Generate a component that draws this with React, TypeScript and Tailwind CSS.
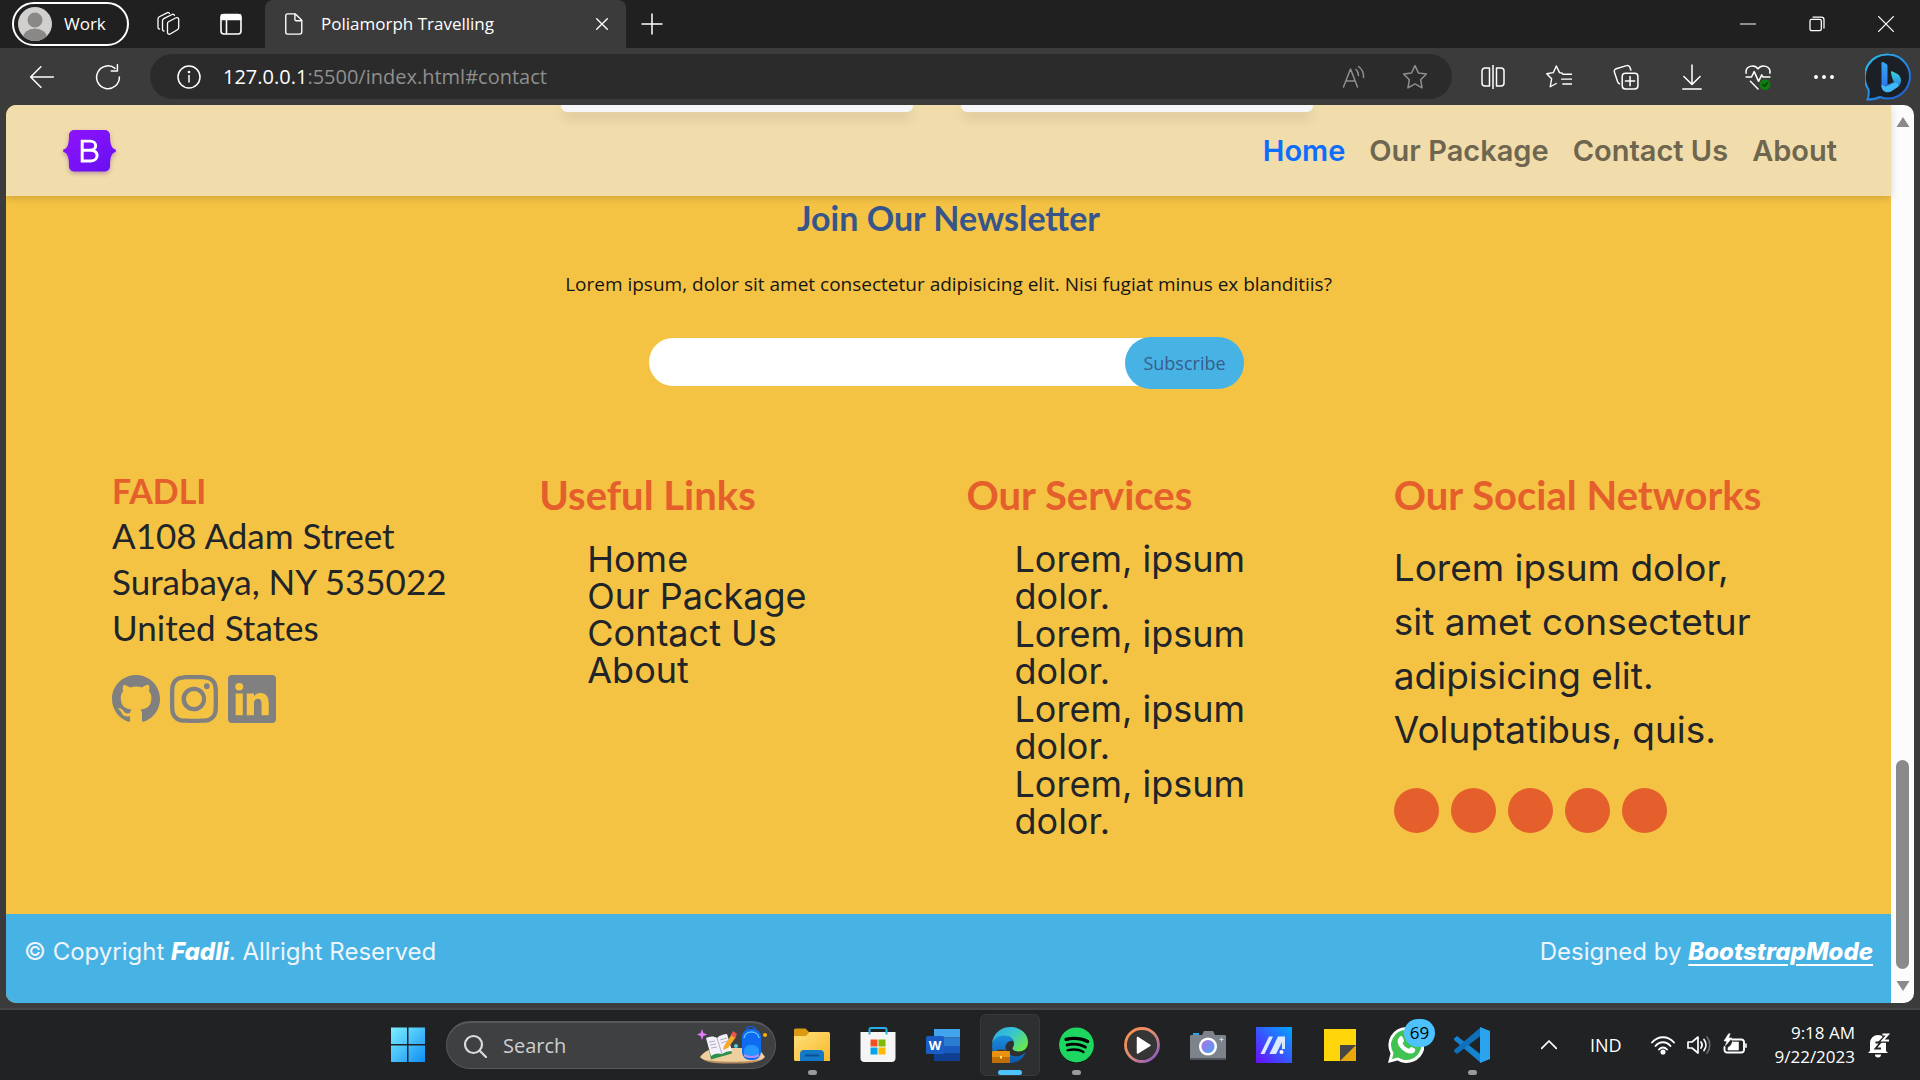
import type { ReactNode } from "react";
import { BsGithub, BsInstagram, BsLinkedin } from "react-icons/bs";
import { FaSpotify } from "react-icons/fa";

const UI = "font-['Open_Sans',sans-serif]";
const HEAD = "font-['Lato',sans-serif]";
const BODY = "font-['Inter',sans-serif]";

function Stroke({ children, box = 24, className = "size-6", width = 1.3 }: { children: ReactNode; box?: number; className?: string; width?: number }) {
  return (
    <svg viewBox={`0 0 ${box} ${box}`} className={className} fill="none" stroke="currentColor" strokeWidth={width} strokeLinecap="round" strokeLinejoin="round" aria-hidden="true">
      {children}
    </svg>
  );
}

function ChromeButton({ label, className, children }: { label: string; className: string; children: ReactNode }) {
  return (
    <button type="button" aria-label={label} className={`flex items-center justify-center shrink-0 ${className}`}>
      {children}
    </button>
  );
}

function TabStrip() {
  return (
    <div className="flex h-12 bg-[#202020] text-white">
      <button type="button" className="ml-3 mt-[2px] flex h-11 w-[117px] shrink-0 items-center gap-3 rounded-full border-2 border-white pl-1 text-[17px]">
        <svg viewBox="0 0 34 34" className="size-[34px]" aria-hidden="true">
          <clipPath id="face"><circle cx="17" cy="17" r="17" /></clipPath>
          <g clipPath="url(#face)">
            <rect width="34" height="34" fill="#d2d0ce" />
            <circle cx="17" cy="13" r="7.5" fill="#8a8886" />
            <ellipse cx="17" cy="31" rx="12" ry="9.5" fill="#8a8886" />
          </g>
        </svg>
        Work
      </button>
      <ChromeButton label="Workspaces" className="ml-[27px] w-6">
        <Stroke className="size-[26px]">
          <path d="M11.500 11.500a2 2 0 0 1 1-1.700l7.500-4a1.800 1.800 0 0 1 2.700 1.500v8.200a2.500 2.500 0 0 1-1.300 2.200l-7.200 4.300a1.800 1.800 0 0 1-2.700-1.600z" />
          <path d="M8 19a1.500 1.500 0 0 1-1.500-1.500V8.800A2.500 2.500 0 0 1 7.800 6.600L16 2.500a1.800 1.800 0 0 1 2.500.8" />
          <path d="M3.500 17A1.500 1.500 0 0 1 2 15.500V7a2.500 2.500 0 0 1 1.300-2.200L11 .8a1.800 1.800 0 0 1 2.500.6" />
        </Stroke>
      </ChromeButton>
      <ChromeButton label="Tab actions" className="ml-[39px] w-6">
        <Stroke width={1.6}>
          <rect x="2" y="2.500" width="20" height="19.500" rx="3" />
          <path d="M2.500 3h19v4.500h-19z" fill="currentColor" />
          <path d="M7.500 8v13.500" />
        </Stroke>
      </ChromeButton>
      <div className="ml-[22px] flex w-[361px] min-w-0 items-center rounded-t-lg bg-[#3b3b3b] pl-[18px] text-[17px]">
        <Stroke className="h-[26px] w-[22px] shrink-0" width={1.500}>
          <path d="M5 1h8.500l7 7v12.500a2.500 2.500 0 0 1-2.500 2.500H5a2 2 0 0 1-2-2V3a2 2 0 0 1 2-2zM13 1.500V7a1.500 1.500 0 0 0 1.500 1.500h5.500" />
        </Stroke>
        <span className="ml-4 flex-1 truncate">Poliamorph Travelling</span>
        <ChromeButton label="Close tab" className="mr-[14px] w-5">
          <Stroke className="size-4" width={2}><path d="M4 4l16 16M20 4L4 20" /></Stroke>
        </ChromeButton>
      </div>
      <ChromeButton label="New tab" className="ml-[14px] w-6">
        <Stroke width={1.500}><path d="M12 2v20M2 12h20" /></Stroke>
      </ChromeButton>
      <div className="ml-auto flex">
        <ChromeButton label="Minimize" className="w-[69px]"><Stroke className="size-4" width={1.700}><path d="M0 12h24" /></Stroke></ChromeButton>
        <ChromeButton label="Restore" className="w-[69px]">
          <Stroke className="size-4" width={1.900}><rect x="1.500" y="5" width="17" height="17" rx="2.500" /><path d="M6 1.800h12.500a4 4 0 0 1 4 4V18" /></Stroke>
        </ChromeButton>
        <ChromeButton label="Close window" className="w-[69px]"><Stroke className="size-4" width={1.900}><path d="M1 1l22 22M23 1L1 23" /></Stroke></ChromeButton>
      </div>
    </div>
  );
}

function Toolbar() {
  return (
    <div className="flex h-[57px] items-center bg-[#3b3b3b] text-white">
      <ChromeButton label="Back" className="ml-7 w-7"><Stroke className="size-[26px]" width={1.400}><path d="M22.500 12H2M11 2.500L1.500 12l9.500 9.500" /></Stroke></ChromeButton>
      <ChromeButton label="Refresh" className="ml-[38px] w-7"><Stroke className="size-[26px]" width={1.400}><path d="M22.500 12a10.500 10.500 0 1 1-4-8M20.700 .8v5.700h-5.700" /></Stroke></ChromeButton>
      <div className="ml-7 flex h-[45px] min-w-0 flex-1 items-center rounded-full bg-[#2b2b2b] pl-[27px] pr-6">
        <ChromeButton label="Site information" className="w-6">
          <Stroke width={1.500}><circle cx="12" cy="12" r="11" /><path d="M12 10.500v6.500" /><circle cx="12" cy="7" r=".6" fill="currentColor" /></Stroke>
        </ChromeButton>
        <div className="ml-[22px] flex-1 truncate text-[20px] text-[#8f8f8f]"><span className="text-white">127.0.0.1</span>:5500/index.html#contact</div>
        <ChromeButton label="Read aloud" className="w-6 text-[#8f8f8f]">
          <Stroke width={1.500}><path d="M1.500 22L8.500 4l7 18M4 16h9M14 4.500a8 8 0 0 1 2.500 6M16.500 1.500a12 12 0 0 1 5 11" /></Stroke>
        </ChromeButton>
        <ChromeButton label="Add to favorites" className="ml-9 w-[26px] text-[#8f8f8f]">
          <Stroke className="size-[26px]" width={1.400}><path d="M12 1.500l3.200 6.800 7.300 1-5.300 5.200 1.300 7.500L12 18.400 5.500 22l1.300-7.500L1.500 9.300l7.300-1z" /></Stroke>
        </ChromeButton>
      </div>
      <div className="ml-2 flex items-center">
        <ChromeButton label="Split screen" className="w-[66px]"><Stroke width={1.500}><path d="M8.500 3H4a3 3 0 0 0-3 3v12a3 3 0 0 0 3 3h4.500zM15.500 3H20a3 3 0 0 1 3 3v12a3 3 0 0 1-3 3h-4.500zM12 0v24" /></Stroke></ChromeButton>
        <ChromeButton label="Favorites" className="w-[66px]"><Stroke className="size-[26px]" width={1.300}><path d="M15 8.500L12.500 8 9.500 1.800 6.700 8l-6 1 4.500 4.700-1.300 7.300 5.600-3M15.500 9.500H24M14.500 14H24M15.500 18.500H24" /></Stroke></ChromeButton>
        <ChromeButton label="Collections" className="w-[67px]"><Stroke className="size-[26px]" width={1.400}><rect x="8.500" y="8.500" width="14.500" height="14.500" rx="3" /><path d="M15.750 11.500v8.500M11.500 15.750H20M16.500 5.500l-.8-2.300A2.500 2.500 0 0 0 12.500 1.500L3 4.300A2.500 2.500 0 0 0 1.300 7.500l3 9a2.500 2.500 0 0 0 1.700 1.700" /></Stroke></ChromeButton>
        <ChromeButton label="Downloads" className="w-[66px]"><Stroke className="size-[26px]" width={1.400}><path d="M12 1v18M4.500 11.500L12 19l7.500-7.500M3.500 23h17" /></Stroke></ChromeButton>
        <ChromeButton label="Browser essentials" className="w-[66px]">
          <Stroke className="size-[26px]" width={1.400}><path d="M1 8.500C0 2 8.500-.5 12 4.500 15.500-.5 24 2 23 8.500M1 12h5l2.500-5 4 9 3-6 1 2H23M5 16l7 7" /><circle cx="18.500" cy="19" r="5" fill="#107c10" stroke="none" /><path d="M16.500 19l1.500 1.500 2.800-3" stroke="#063b06" /></Stroke>
        </ChromeButton>
        <ChromeButton label="Settings and more" className="w-[66px]"><Stroke><g fill="currentColor"><circle cx="4" cy="12" r="1.300" /><circle cx="12" cy="12" r="1.300" /><circle cx="20" cy="12" r="1.300" /></g></Stroke></ChromeButton>
        <ChromeButton label="Bing Chat" className="mr-[6px] ml-[7px] w-[50px]">
          <svg viewBox="0 0 48 48" className="size-12" aria-hidden="true">
            <defs>
              <linearGradient id="ring" x1="0" y1="0" x2="1" y2="1"><stop offset="0" stopColor="#2bc4ee" /><stop offset="1" stopColor="#1c56d8" /></linearGradient>
              <linearGradient id="bing" x1="0" y1="0" x2="0" y2="1"><stop offset="0" stopColor="#35a6f6" /><stop offset="1" stopColor="#2f74ea" /></linearGradient>
              <linearGradient id="bing2" x1="0" y1="0" x2="0" y2="1"><stop offset="0" stopColor="#35d6d8" /><stop offset="1" stopColor="#2769e8" /></linearGradient>
            </defs>
            <path d="M24 1.500a22 22 0 1 1-9 42.500c-4 2-8 2.500-12.500 2.500 1.500-3 1.500-6 1-10A22.500 22.500 0 0 1 24 1.500z" fill="#1b1f26" stroke="url(#ring)" strokeWidth="2" />
            <path d="M16.500 10.500c0-1.500 1-1.800 2-1.200l2.500 1.500c1 .7 1.500 1.300 1.500 2.500V32l-6 2z" fill="url(#bing)" />
            <path d="M26 19.500c-.3-1 .5-1.500 1.500-1.100l5 2.600c4.500 3 4.500 9 1 12.500L25 38.500l-4-6 8-3.500c-1.500-2.500-2.500-6-3-9.500z" fill="url(#bing2)" />
            <path d="M16.500 31c2 2.500 4.500 2.800 7.500 1.500l6-2.800c3 .3 4 2 3 4l-6.500 4.500c-5.500 3-10-.7-10-5.200z" fill="#41b8f7" />
          </svg>
        </ChromeButton>
      </div>
    </div>
  );
}

function SiteNav() {
  const links = ["Our Package", "Contact Us", "About"];
  return (
    <header className="relative z-10 flex h-[91px] items-center justify-between bg-[#f1dcab] pl-[57px] pr-[54px] shadow-[0_2px_8px_rgba(0,0,0,0.16)]">
      <div className="absolute inset-x-0 top-0 flex h-10 justify-center gap-12 overflow-hidden pr-6">
        <div className="h-[7px] w-[352px] rounded-b-md bg-[#f6f5f8] shadow-[0_6px_12px_rgba(0,0,0,0.12)]" />
        <div className="h-[7px] w-[352px] rounded-b-md bg-[#f6f5f8] shadow-[0_6px_12px_rgba(0,0,0,0.12)]" />
      </div>
      <a href="#home" aria-label="Bootstrap" className="relative">
        <svg viewBox="0 0 512 408" className="h-[42px] w-[53px] drop-shadow-[0_2px_2px_rgba(60,0,120,0.3)]" aria-hidden="true">
          <defs><linearGradient id="bs" x1="0" y1="0" x2="1" y2="1"><stop offset="0" stopColor="#9013fe" /><stop offset="1" stopColor="#6610f2" /></linearGradient></defs>
          <path fill="url(#bs)" d="M56.500 53.300C55.600 26 76.800 0 106.300 0h299.500c29.500 0 50.700 26 49.700 53.300-.9 26.300.3 60.300 8.900 88.100 8.600 27.900 23.100 45.500 46.900 47.800v25.600c-23.800 2.300-38.300 19.900-46.900 47.800-8.600 27.800-9.800 61.800-8.900 88.100.9 27.300-20.200 53.300-49.700 53.300H106.300c-29.500 0-50.700-26-49.800-53.300.9-26.300-.3-60.300-8.900-88.100-8.600-27.900-23.200-45.500-47-47.800v-25.600c23.800-2.300 38.400-19.900 47-47.800 8.600-27.800 9.800-61.800 8.900-88.100z" />
          <path fill="none" stroke="#fff" strokeWidth="29" d="M185 108h77c72 0 72 88 0 88h-77m0 0h84c82 0 80 105 0 105h-84zM185 94v221" />
        </svg>
      </a>
      <nav className={`relative flex gap-6 text-[29px] leading-9 font-semibold text-[#6e664f] ${BODY}`}>
        <a href="#home" className="text-[#0d6efd]">Home</a>
        {links.map((l) => <a key={l} href="#contact">{l}</a>)}
      </nav>
    </header>
  );
}

function Newsletter() {
  return (
    <section className="flex flex-col items-center text-center">
      <h2 className={`text-[34px] leading-[44px] font-bold text-[#36558a] ${HEAD}`}>Join Our Newsletter</h2>
      <p className={`mt-[30px] text-[19px] leading-7 text-[#151515] ${UI}`}>Lorem ipsum, dolor sit amet consectetur adipisicing elit. Nisi fugiat minus ex blanditiis?</p>
      <form className="mt-[39px] mr-1 flex h-[52px] items-start" onSubmit={(e) => e.preventDefault()}>
        <input type="email" aria-label="Email address" className="mt-px h-12 w-[494px] rounded-l-full bg-white px-6 text-lg outline-none" />
        <button type="submit" className={`-ml-[18px] h-[52px] w-[119px] rounded-full bg-[#47b2e4] text-[18px] text-[#37517e]/90 ${UI}`}>Subscribe</button>
      </form>
    </section>
  );
}

function ColumnTitle({ children }: { children: ReactNode }) {
  return <h3 className={`text-[40px] leading-[50px] font-bold whitespace-nowrap text-[#e45f2b] ${HEAD}`}>{children}</h3>;
}

function FooterColumns() {
  const useful = ["Home", "Our Package", "Contact Us", "About"];
  const services = ["a", "b", "c", "d"];
  const social = ["Twitter", "Facebook", "Instagram", "Skype", "LinkedIn"];
  return (
    <section className={`grid grid-cols-4 px-[88px] pt-[81px] pb-[72px] text-[#212529] ${BODY}`}>
      <div className="px-[18px]">
        <h3 className={`text-[34px] leading-[42px] font-bold text-[#e45f2b] ${HEAD}`}>FADLI</h3>
        <address className={`text-[35px] leading-[46px] whitespace-nowrap not-italic ${HEAD}`}>
          A108 Adam Street<br />Surabaya, NY 535022<br />United States
        </address>
        <div className="mt-[25px] flex gap-[10px] text-[48px] text-[#808080]">
          <a href="#github" aria-label="GitHub"><BsGithub /></a>
          <a href="#instagram" aria-label="Instagram"><BsInstagram /></a>
          <a href="#linkedin" aria-label="LinkedIn"><BsLinkedin /></a>
        </div>
      </div>
      <div className="px-[18px]">
        <ColumnTitle>Useful Links</ColumnTitle>
        <ul className="pt-[21px] pl-12 text-[36px] leading-[37px] whitespace-nowrap">
          {useful.map((u) => <li key={u}><a href="#home">{u}</a></li>)}
        </ul>
      </div>
      <div className="px-[18px]">
        <ColumnTitle>Our Services</ColumnTitle>
        <ul className="pt-[21px] pl-12 text-[36px] leading-[37px]">
          {services.map((s) => <li key={s} className="pb-px"><a href="#services">Lorem, ipsum<br />dolor.</a></li>)}
        </ul>
      </div>
      <div className="px-[18px]">
        <ColumnTitle>Our Social Networks</ColumnTitle>
        <p className="mt-[21px] text-[37px] leading-[54px] whitespace-nowrap">
          Lorem ipsum dolor,<br />sit amet consectetur<br />adipisicing elit.<br />Voluptatibus, quis.
        </p>
        <div className="mt-[31px] flex gap-3">
          {social.map((s) => <a key={s} href="#social" aria-label={s} className="size-[45px] rounded-full bg-[#e45f2b]" />)}
        </div>
      </div>
    </section>
  );
}

function Site() {
  return (
    <div className="flex flex-1 overflow-hidden rounded-[10px]">
      <main className="flex min-w-0 flex-1 flex-col bg-[#f5c344]">
        <SiteNav />
        <Newsletter />
        <FooterColumns />
        <footer className={`mt-auto flex h-[89px] items-start justify-between bg-[#47b2e4] px-[18px] pt-5 text-[24px] leading-9 text-[#eef5fc] ${BODY}`}>
          <p>© Copyright <strong className="font-extrabold italic text-white">Fadli</strong>. Allright Reserved</p>
          <p>Designed by <a href="#bootstrapmode" className="font-extrabold text-white italic underline decoration-2 underline-offset-4">BootstrapMode</a></p>
        </footer>
      </main>
      <div className="flex w-[23px] shrink-0 flex-col items-center bg-[#fcfcfc] py-3 text-[#8a8a8a]">
        <svg viewBox="0 0 14 10" className="w-[14px]" aria-hidden="true"><path d="M7 0l6.500 10H.5z" fill="currentColor" /></svg>
        <div className="mt-auto mb-3 h-[209px] w-[13px] rounded-full bg-[#8a8a8a]" />
        <svg viewBox="0 0 14 10" className="w-[14px]" aria-hidden="true"><path d="M7 10L.5 0h13z" fill="currentColor" /></svg>
      </div>
    </div>
  );
}

const WindowsLogo = () => (
  <svg viewBox="0 0 36 36" className="size-9" aria-hidden="true">
    <defs><linearGradient id="win" x1="0" y1="0" x2="1" y2="1"><stop offset="0" stopColor="#7df0ff" /><stop offset="1" stopColor="#0f8ef5" /></linearGradient></defs>
    <path fill="url(#win)" d="M1 .5h16V17H1zM18.500 .5H35V17H18.500zM1 18.500h16V35H1zM18.500 18.500H35V35H18.500z" />
  </svg>
);

const SearchArt = () => (
  <svg viewBox="0 0 72 40" className="h-10 w-[72px]" aria-hidden="true">
    <path d="M3 31c3-4 8-9 20-9h30c8 0 12 4 15 9-5 5-12 6-32 6S8 36 3 31z" fill="#f0cf9f" />
    <path d="M6 33.500c14 3 44 3 58 0-6 4-14 4-28 4s-24 0-30-4z" fill="#b98b5c" />
    <path d="M10 14l21-4 4 17.500-21 6z" fill="#2f8f4e" />
    <path d="M9 12c4-2 8-2 11 0 3-3 7-4 10-4l5 17c-4 0-7 1-10 3-3-1-7-1-11 2z" fill="#f4f1fa" />
    <path d="M20 12l5 16M12 16l6-1M13 19l6-1M14 22l6-1M23 14l7-2M24 17l7-2" stroke="#a9a3bb" strokeWidth=".9" />
    <path d="M27 20l8-12 4 3-8 11-5 2z" fill="#f9a825" />
    <path d="M34 9l2-4 4 3-2 4z" fill="#ef5350" />
    <path d="M5 3l1.400 4 4 1.500-4 1.500L5 14l-1.400-4L0 8.500 3.600 7z" fill="#e27cf5" />
    <circle cx="39" cy="20" r="2" fill="#4dd0e1" /><circle cx="68" cy="9" r="2" fill="#ffb300" />
    <path d="M50 4a4 4 0 0 1 8 0" fill="none" stroke="#1257d0" strokeWidth="2" />
    <rect x="45" y="3" width="19" height="31" rx="8" fill="#0d6cf2" />
    <path d="M47 12c1-8 14-8 15 0" fill="none" stroke="#5cc4ff" strokeWidth="1.500" />
    <rect x="47" y="19" width="15" height="13" rx="6" fill="#2596ff" />
    <path d="M47 28q7.500 4 15 0v2.500q-7.500 3-15 0z" fill="#b48cf5" />
  </svg>
);

const Explorer = () => (
  <svg viewBox="0 0 36 36" className="size-9" aria-hidden="true">
    <defs><linearGradient id="fold" x1="0" y1="0" x2="1" y2="1"><stop offset="0" stopColor="#ffe07a" /><stop offset="1" stopColor="#f7b92c" /></linearGradient></defs>
    <path d="M0 3a1.500 1.500 0 0 1 1.500-1.500h10L15 5h20v8H0z" fill="#dc9a13" />
    <path d="M0 9h12l3.500-4H34.500a1.500 1.500 0 0 1 1.500 1.500V34H1.500A1.500 1.500 0 0 1 0 32.500z" fill="url(#fold)" />
    <path d="M6 34v-7a4 4 0 0 1 4-4h16a4 4 0 0 1 4 4v7z" fill="#1478c8" />
    <path d="M11 28.500h14" stroke="#0b4f8e" strokeWidth="2" />
  </svg>
);

const Store = () => (
  <svg viewBox="0 0 36 36" className="size-9" aria-hidden="true">
    <path d="M9.500 8V2.500a1.500 1.500 0 0 1 1.500-1.500h14a1.500 1.500 0 0 1 1.500 1.500V8" fill="none" stroke="#27aee8" strokeWidth="2" />
    <path d="M.5 5h35v26a4 4 0 0 1-4 4h-27a4 4 0 0 1-4-4z" fill="#f5f5f5" />
    <path d="M9.500 5V7.500M26.500 5V7.500" stroke="#27aee8" strokeWidth="2" />
    <path d="M10.500 12.500h7v7h-7z" fill="#f25022" /><path d="M18.500 12.500h7v7h-7z" fill="#7fba00" />
    <path d="M10.500 20.500h7v7h-7z" fill="#00a4ef" /><path d="M18.500 20.500h7v7h-7z" fill="#ffb900" />
  </svg>
);

const Word = () => (
  <svg viewBox="0 0 36 36" className="size-9" aria-hidden="true">
    <path d="M8 2h26v8.500H8z" fill="#41a5ee" /><path d="M8 10.500h26V19H8z" fill="#2b7cd3" /><path d="M8 19h26v7H8z" fill="#185abd" /><path d="M8 26h26v8H8z" fill="#103f91" />
    <rect x="0" y="9" width="18" height="18" rx="1.500" fill="#1a5dc4" />
    <text x="9" y="23" textAnchor="middle" fontFamily="Open Sans" fontWeight="700" fontSize="13" fill="#fff">W</text>
  </svg>
);

const Edge = () => (
  <svg viewBox="0 0 36 36" className="size-9" aria-hidden="true">
    <defs>
      <linearGradient id="eg" x1="0" y1="0" x2="1" y2=".7"><stop offset="0" stopColor="#2aa4ea" /><stop offset=".5" stopColor="#37c6cf" /><stop offset="1" stopColor="#6be84c" /></linearGradient>
      <linearGradient id="eb" x1="0" y1="0" x2="0" y2="1"><stop offset="0" stopColor="#1b8fe0" /><stop offset="1" stopColor="#0d56a8" /></linearGradient>
    </defs>
    <path d="M0 17C1 6 9 0 18.500 0 29 0 36 7 36 15c0 6-4 9.500-9 9.500-4 0-6.500-1.500-6.500-3 0-1 1.500-2 1.500-5 0-4-4-7.500-9-7.500-6 0-11 3-13 8z" fill="url(#eg)" />
    <path d="M0 20C0 12 6 8.500 12 8.500c5 0 8.500 2.500 9.700 5.500C16 12.500 12 18 14 23.500c2 4.500 8 6.500 13 5.500 3-.6 4.500-2.500 6.500-3.500-2 6-8 10.500-15 10.500C8 36 0 29 0 20z" fill="url(#eb)" />
    <path d="M6 25.500v-2h6v2" fill="none" stroke="#53300b" strokeWidth="1.500" />
    <rect x="0" y="24" width="18" height="12" rx="1" fill="#e8920f" /><path d="M0 30h18v6H0z" fill="#c06f08" /><rect x="8" y="29" width="2" height="2.500" fill="#ffe27a" />
  </svg>
);

const Spotify = () => (
  <span className="flex size-[35px] items-center justify-center rounded-full bg-black text-[36px] text-[#1ed760]"><FaSpotify /></span>
);

const Player = () => (
  <svg viewBox="0 0 36 36" className="size-9" aria-hidden="true">
    <defs><linearGradient id="mp" x1="0" y1="0" x2="1" y2="1"><stop offset="0" stopColor="#ff9142" /><stop offset=".5" stopColor="#e08a78" /><stop offset="1" stopColor="#7a52d0" /></linearGradient></defs>
    <circle cx="18" cy="18" r="16.500" fill="#353535" stroke="url(#mp)" strokeWidth="2.800" />
    <path d="M13.500 10.500v15.500l12.500-7.700z" fill="#fff" stroke="#fff" strokeWidth="1.500" strokeLinejoin="round" />
  </svg>
);

const Camera = () => (
  <svg viewBox="0 0 36 36" className="size-9" aria-hidden="true">
    <defs><linearGradient id="lens" x1="0" y1="0" x2="1" y2="1"><stop offset="0" stopColor="#b06fe0" /><stop offset="1" stopColor="#4aa6f5" /></linearGradient></defs>
    <path d="M3 6h6v4H3z" fill="#2aa9e8" />
    <path d="M1 8h11l2-4h9l2 4h10a1 1 0 0 1 1 1v24H0V9a1 1 0 0 1 1-1z" fill="#7d838a" /><path d="M0 31h36v2H0z" fill="#50555b" />
    <circle cx="18" cy="19.500" r="7.800" fill="url(#lens)" stroke="#fff" strokeWidth="2.500" /><path d="M31.500 10.500v4M29.500 12.500h4" stroke="#d4dade" />
  </svg>
);

const Asus = () => (
  <svg viewBox="0 0 36 36" className="size-9" aria-hidden="true">
    <defs><linearGradient id="as" x1="1" y1="0" x2="0" y2="1"><stop offset="0" stopColor="#00a8ff" /><stop offset="1" stopColor="#6a0cff" /></linearGradient></defs>
    <path d="M0 0h36v36H0z" fill="url(#as)" />
    <path d="M4.500 27L13 9.500h4L8.500 27zM13.500 27L22 9.500h7V22h-3V15L20 27z" fill="#dceaff" /><circle cx="25.500" cy="25" r="2" fill="#fff" />
  </svg>
);

const Notes = () => (
  <svg viewBox="0 0 36 36" className="size-9" aria-hidden="true">
    <path d="M2 2h32v16L18 34H2z" fill="#ffd60a" /><path d="M18 18h16v16H18z" fill="#e8a70c" /><path d="M18 18h16L18 34z" fill="#454545" />
  </svg>
);

const VsCode = () => (
  <svg viewBox="0 0 36 36" className="size-9" aria-hidden="true">
    <path d="M3 9L0 11.500v1.500L27 36V27.500z" fill="#1583cf" />
    <path d="M3 27L0 24.500V23L27 0v8.500z" fill="#0f6fb8" />
    <path d="M26 0l10 4v28l-10 4z" fill="#2ba3ee" />
  </svg>
);

const WhatsApp = () => (
  <span className="relative flex size-9 items-center justify-center">
    <svg viewBox="0 0 36 36" className="size-9" aria-hidden="true"><path d="M18 0a18 18 0 1 1-8.500 33.500L0 36l2.500-9.500A18 18 0 0 1 18 0z" fill="#fff" /><path d="M18 3a15 15 0 1 1-8 27.500L4 32l1.600-5.800A15 15 0 0 1 18 3z" fill="#40c351" /><path d="M12 9.500c1.500-1 2.500 0 3 1.500l1 2.500c.3 1-1.300 2-1.300 3 1.300 2.500 3.300 4.200 6 5.300 1-.3 1.800-2 2.800-1.800l3.500 1.700c.7.500 0 3-1 3.800-3 2.500-8.500.3-12-3-3.800-3.500-6.500-9.500-2-13z" fill="#fff" /></svg>
    <span className="absolute -top-2 left-4 flex h-7 w-[31px] items-center justify-center rounded-full bg-[#4cc2ff] text-[17px] text-black">69</span>
  </span>
);

function Taskbar() {
  const apps: { name: string; icon: ReactNode; state?: "active" | "open" }[] = [
    { name: "File Explorer", icon: <Explorer />, state: "open" },
    { name: "Microsoft Store", icon: <Store /> },
    { name: "Word", icon: <Word /> },
    { name: "Microsoft Edge", icon: <Edge />, state: "active" },
    { name: "Spotify", icon: <Spotify />, state: "open" },
    { name: "Media Player", icon: <Player /> },
    { name: "Camera", icon: <Camera /> },
    { name: "MyASUS", icon: <Asus /> },
    { name: "Sticky Notes", icon: <Notes /> },
    { name: "WhatsApp", icon: <WhatsApp /> },
    { name: "Visual Studio Code", icon: <VsCode />, state: "open" },
  ];
  return (
    <div className="flex h-[70px] items-center bg-[#202224] text-white">
      <div className="flex min-w-0 flex-1 items-center justify-end">
        <button type="button" aria-label="Start" className="flex w-[66px] justify-center"><WindowsLogo /></button>
        <label className="ml-[5px] flex h-12 w-[330px] items-center rounded-full border border-t-2 border-[#57585a] bg-[#3f4042] pl-4 pr-[6px]">
          <Stroke width={2.200} className="size-6 text-[#dcdcdc]"><circle cx="10.500" cy="10.500" r="8.500" /><path d="M17 17l6 6" /></Stroke>
          <input type="search" placeholder="Search" className="ml-4 min-w-0 flex-1 bg-transparent text-[20px] placeholder-[#cfcfcf] outline-none" />
          <SearchArt />
        </label>
        <div className="ml-[3px] flex">
          {apps.map((a) => (
            <button key={a.name} type="button" aria-label={a.name} className="relative flex h-[62px] w-[66px] items-center justify-center">
              {a.state === "active" && <span className="absolute inset-x-[3px] inset-y-0 rounded-md border border-[#37393b] bg-[#2d2f31]" />}
              <span className="relative">{a.icon}</span>
              {a.state === "active" && <span className="absolute bottom-px h-[5px] w-6 rounded-full bg-[#4cc2ff]" />}
              {a.state === "open" && <span className="absolute bottom-px h-[5px] w-[9px] rounded-full bg-[#9a9a9a]" />}
            </button>
          ))}
        </div>
      </div>
      <div className="flex w-[415px] shrink-0 items-center pl-9">
        <ChromeButton label="Show hidden icons" className="w-4"><Stroke className="size-4" width={2.600}><path d="M1 17L12 6l11 11" /></Stroke></ChromeButton>
        <button type="button" className="ml-[33px] text-[18px]">IND</button>
        <div className="ml-[29px] flex items-center gap-3">
          <Stroke width={1.900}><path d="M1 9.500c6-7 16-7 22 0M4.500 13c4.200-5 10.800-5 15 0M8 16.500c2.300-2.700 5.700-2.700 8 0" /><circle cx="12" cy="19" r="1.600" fill="currentColor" /></Stroke>
          <Stroke width={1.700}><path d="M1 9v6h4l6 5V4L5 9zM14 9a5 5 0 0 1 0 6M17 6.500a9 9 0 0 1 0 11" /><path d="M20 4a13 13 0 0 1 0 16" stroke="#6a6a6a" /></Stroke>
          <Stroke width={1.900}><path d="M9 6.500h9.500a2.500 2.500 0 0 1 2.500 2.500v8a2.500 2.500 0 0 1-2.500 2.500H4a2.500 2.500 0 0 1-2.500-2.500v-3" /><path d="M9.500 9H15.500v8H5v-2.500c2.500-1 3.500-3 4.500-5.500zM22.500 11v3.500h1V11zM5.500 1L1 8h3l-1.500 4.500L9 5H5.500L7 1z" fill="currentColor" strokeWidth={.6} /></Stroke>
        </div>
        <time className="ml-auto text-right text-[17px] leading-6">9:18 AM<br />9/22/2023</time>
        <svg viewBox="0 0 24 26" className="mr-[29px] ml-3 h-[26px] w-6 shrink-0" aria-hidden="true">
          <path d="M3 19V11a8 8 0 0 1 16 0v8l2 2H1zM8 22.500h6a3 3 0 0 1-6 0z" fill="#fff" />
          <path d="M8.500 10.500h5l-5 6H14" fill="none" stroke="#202224" strokeWidth="1.800" />
          <path d="M15.500 2.500H21l-5.500 6H22" fill="none" stroke="#202224" strokeWidth="4.500" /><path d="M15.500 2.500H21l-5.500 6H22" fill="none" stroke="#fff" strokeWidth="1.900" />
        </svg>
      </div>
    </div>
  );
}

export default function App() {
  return (
    <div className={`flex min-h-screen flex-col bg-[#3b3b3b] ${UI}`}>
      <TabStrip />
      <Toolbar />
      <div className="flex flex-1 border-b-2 border-[#464646] px-[6px] pb-[5px]"><Site /></div>
      <Taskbar />
    </div>
  );
}
